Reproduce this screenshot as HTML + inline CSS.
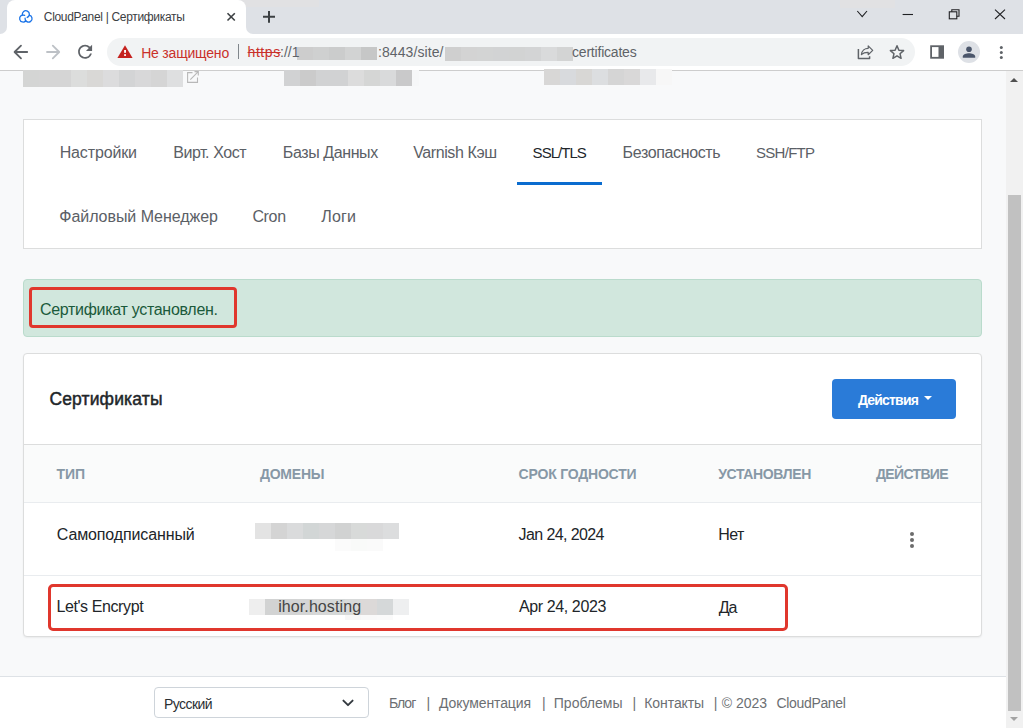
<!DOCTYPE html>
<html><head><meta charset="utf-8"><style>
html,body{margin:0;padding:0;}
body{width:1023px;height:728px;overflow:hidden;position:relative;background:#f8f9fa;font-family:"Liberation Sans", sans-serif;}
.t{position:absolute;white-space:pre;font-family:"Liberation Sans", sans-serif;}
.r{position:absolute;}
</style></head><body>
<!-- tab strip -->
<div class="r" style="left:0;top:0;width:1023px;height:71px;background:#fff"></div>
<div class="r" style="left:0;top:0;width:260px;height:10px;background:#dee1e6"></div>
<div class="r" style="left:0;top:0;width:7px;height:34px;background:#dee1e6;border-bottom-right-radius:7px"></div>
<div class="r" style="left:246px;top:0;width:777px;height:34px;background:#dee1e6;border-bottom-left-radius:7px"></div>
<div class="r" style="left:840px;top:0;width:55px;height:8px;background:#e1e1e3"></div>
<div class="r" style="left:240px;top:0;width:79px;height:7px;background:#e1e1e3"></div>
<div class="r" style="left:7px;top:0;width:239px;height:40px;background:#fff;border-radius:8px 8px 0 0"></div>
<div class="r" style="left:0;top:70px;width:1023px;height:1px;background:#cdcdcd"></div>
<!-- omnibox -->
<div class="r" style="left:107px;top:38px;width:808px;height:28px;background:#f1f3f4;border-radius:14px"></div>
<div class="r" style="left:238px;top:44px;width:1px;height:15px;background:#80868b"></div>
<!-- page -->
<div class="r" style="left:0;top:71px;width:1006px;height:605px;background:#f8f9fa"></div>
<div class="r" style="left:23px;top:119px;width:957px;height:128px;background:#fff;border:1px solid #dcdddd"></div>
<div class="r" style="left:517px;top:182px;width:85px;height:3px;background:#0a6ccf"></div>
<div class="r" style="left:23px;top:279px;width:957px;height:56px;background:#d1e7dd;border:1px solid #badbcc;border-radius:4px"></div>
<div class="r" style="left:29px;top:287px;width:202px;height:35px;border:3px solid #e0372d;border-radius:4px"></div>
<div class="r" style="left:23px;top:353px;width:957px;height:282px;background:#fff;border:1px solid #dcdddd;border-radius:4px;box-shadow:0 1px 2px rgba(0,0,0,.06)"></div>
<div class="r" style="left:24px;top:444px;width:957px;height:1px;background:#dcdddd"></div>
<div class="r" style="left:24px;top:445px;width:957px;height:57px;background:#fafbfb"></div>
<div class="r" style="left:24px;top:502px;width:957px;height:1px;background:#e9ecef"></div>
<div class="r" style="left:24px;top:575px;width:957px;height:1px;background:#e9ecef"></div>
<div class="r" style="left:832px;top:379px;width:124px;height:40px;background:#2a7bd8;border-radius:4px"></div>
<div class="r" style="left:923.5px;top:396px;width:0;height:0;border-left:4px solid transparent;border-right:4px solid transparent;border-top:4px solid #fff"></div>
<div class="r" style="left:48px;top:584px;width:734px;height:41px;border:3px solid #e0372d;border-radius:5px"></div>
<!-- kebab -->
<div class="r" style="left:910px;top:532px;width:4px;height:4px;border-radius:2px;background:#6c6c6c"></div>
<div class="r" style="left:910px;top:538px;width:4px;height:4px;border-radius:2px;background:#6c6c6c"></div>
<div class="r" style="left:910px;top:544px;width:4px;height:4px;border-radius:2px;background:#6c6c6c"></div>
<!-- footer -->
<div class="r" style="left:0;top:676px;width:1006px;height:1px;background:#dee2e6"></div>
<div class="r" style="left:0;top:677px;width:1006px;height:51px;background:#fff"></div>
<div class="r" style="left:154px;top:687px;width:213px;height:29px;border:1px solid #ced4da;border-radius:4px;background:#fff"></div>
<!-- scrollbar -->
<div class="r" style="left:1006px;top:71px;width:17px;height:657px;background:#f1f1f1"></div>
<div class="r" style="left:1008px;top:195px;width:13px;height:516px;background:#c1c1c1"></div>
<div class="r" style="left:1010px;top:78px;width:0;height:0;border-left:4px solid transparent;border-right:4px solid transparent;border-bottom:4px solid #505050"></div>
<div class="r" style="left:1010px;top:717px;width:0;height:0;border-left:4px solid transparent;border-right:4px solid transparent;border-top:4px solid #a3a3a3"></div>
<div class="r" style="left:23px;top:70px;width:16px;height:17px;background:#d4d5d4"></div><div class="r" style="left:39px;top:70px;width:16px;height:17px;background:#d5d5d5"></div><div class="r" style="left:55px;top:70px;width:16px;height:17px;background:#d5d5d5"></div><div class="r" style="left:71px;top:70px;width:16px;height:17px;background:#dcdddc"></div><div class="r" style="left:87px;top:70px;width:16px;height:17px;background:#d9d8d6"></div><div class="r" style="left:103px;top:70px;width:16px;height:17px;background:#dcdcdd"></div><div class="r" style="left:119px;top:70px;width:16px;height:17px;background:#d3d4d5"></div><div class="r" style="left:135px;top:70px;width:16px;height:17px;background:#d8d8d9"></div><div class="r" style="left:151px;top:70px;width:16px;height:17px;background:#d5d5d5"></div><div class="r" style="left:167px;top:70px;width:16px;height:17px;background:#dedfe0"></div><div class="r" style="left:284px;top:70px;width:16px;height:16px;background:#d1d2d3"></div><div class="r" style="left:300px;top:70px;width:16px;height:16px;background:#cbcbcb"></div><div class="r" style="left:316px;top:70px;width:16px;height:16px;background:#d1d2d3"></div><div class="r" style="left:332px;top:70px;width:16px;height:16px;background:#d1d2d3"></div><div class="r" style="left:348px;top:70px;width:16px;height:16px;background:#dcdcdc"></div><div class="r" style="left:364px;top:70px;width:16px;height:16px;background:#d5d6d5"></div><div class="r" style="left:380px;top:70px;width:16px;height:16px;background:#d9dadb"></div><div class="r" style="left:396px;top:70px;width:16px;height:16px;background:#c9c9ca"></div><div class="r" style="left:412px;top:70px;width:7px;height:16px;background:#f6f7f8"></div><div class="r" style="left:544px;top:69px;width:16px;height:16px;background:#d8d7d6"></div><div class="r" style="left:560px;top:69px;width:16px;height:16px;background:#d8dadd"></div><div class="r" style="left:576px;top:69px;width:16px;height:16px;background:#d8d7d5"></div><div class="r" style="left:592px;top:69px;width:16px;height:16px;background:#dcdee0"></div><div class="r" style="left:608px;top:69px;width:16px;height:16px;background:#d5d5d5"></div><div class="r" style="left:624px;top:69px;width:16px;height:16px;background:#d9d8d8"></div><div class="r" style="left:640px;top:69px;width:16px;height:16px;background:#e8e9eb"></div><div class="r" style="left:656px;top:69px;width:16px;height:16px;background:#f7f7f7"></div><div class="r" style="left:297px;top:47px;width:16px;height:13px;background:#cdcdcd"></div><div class="r" style="left:313px;top:47px;width:16px;height:13px;background:#cfd0d0"></div><div class="r" style="left:329px;top:47px;width:16px;height:13px;background:#cbcccc"></div><div class="r" style="left:345px;top:47px;width:16px;height:13px;background:#d2d3d3"></div><div class="r" style="left:361px;top:47px;width:16px;height:13px;background:#c6c7c7"></div><div class="r" style="left:445px;top:47px;width:16px;height:14px;background:#cfcfcf"></div><div class="r" style="left:461px;top:47px;width:16px;height:14px;background:#d3d3d3"></div><div class="r" style="left:477px;top:47px;width:16px;height:14px;background:#d3d4d4"></div><div class="r" style="left:493px;top:47px;width:16px;height:14px;background:#d2d3d4"></div><div class="r" style="left:509px;top:47px;width:16px;height:14px;background:#d2d3d3"></div><div class="r" style="left:525px;top:47px;width:16px;height:14px;background:#d3d4d5"></div><div class="r" style="left:541px;top:47px;width:16px;height:14px;background:#d9dadb"></div><div class="r" style="left:557px;top:47px;width:16px;height:14px;background:#d3d4d4"></div><div class="r" style="left:255px;top:523px;width:16px;height:16px;background:#e3e3e3"></div><div class="r" style="left:271px;top:523px;width:16px;height:16px;background:#d4d4d4"></div><div class="r" style="left:287px;top:523px;width:16px;height:16px;background:#dadbdc"></div><div class="r" style="left:303px;top:523px;width:16px;height:16px;background:#d2d6d6"></div><div class="r" style="left:319px;top:523px;width:16px;height:16px;background:#d6d7d8"></div><div class="r" style="left:335px;top:523px;width:16px;height:16px;background:#d1d2d2"></div><div class="r" style="left:351px;top:523px;width:16px;height:16px;background:#d8dad9"></div><div class="r" style="left:367px;top:523px;width:16px;height:16px;background:#d9d9da"></div><div class="r" style="left:383px;top:523px;width:16px;height:16px;background:#dcddde"></div><div class="r" style="left:335px;top:539px;width:16px;height:12px;background:#fbfbfb"></div><div class="r" style="left:351px;top:539px;width:16px;height:12px;background:#f9faf9"></div><div class="r" style="left:367px;top:539px;width:16px;height:12px;background:#fafafa"></div><div class="r" style="left:249px;top:599px;width:16px;height:16px;background:#eeeeee"></div><div class="r" style="left:265px;top:599px;width:16px;height:16px;background:#d2d3d3"></div><div class="r" style="left:281px;top:599px;width:16px;height:16px;background:#d3d4d4"></div><div class="r" style="left:297px;top:599px;width:16px;height:16px;background:#d4d5d5"></div><div class="r" style="left:313px;top:599px;width:16px;height:16px;background:#d6d7d7"></div><div class="r" style="left:329px;top:599px;width:16px;height:16px;background:#d5d8d8"></div><div class="r" style="left:345px;top:599px;width:16px;height:16px;background:#d8dada"></div><div class="r" style="left:361px;top:599px;width:16px;height:16px;background:#dcd9d8"></div><div class="r" style="left:377px;top:599px;width:16px;height:16px;background:#d5d8d9"></div><div class="r" style="left:393px;top:599px;width:16px;height:16px;background:#eeeff0"></div><div class="r" style="left:345px;top:615px;width:16px;height:5px;background:#f7f7f7"></div><div class="r" style="left:361px;top:615px;width:16px;height:5px;background:#f9f9f9"></div><div class="r" style="left:377px;top:615px;width:16px;height:5px;background:#fafafa"></div>
<svg class="r" style="left:0;top:0" width="1023" height="728" viewBox="0 0 1023 728">
<path d="M343.4 700.6 L348 705.2 L352.6 700.6" stroke="#343a40" stroke-width="1.9" fill="none" stroke-linecap="round" stroke-linejoin="round"/>
</svg>
<svg class="r" style="left:0;top:0" width="1023" height="100" viewBox="0 0 1023 100">
<g fill="none" stroke="#1a73e8" stroke-width="1.3">
<path stroke-linecap="round" d="M22.46 15.12 A3.5 3.5 0 0 1 27.40 11.11 A3.5 3.5 0 0 1 27.23 17.47 M25.85 20.78 A3.5 3.5 0 0 1 19.74 19.33 A3.5 3.5 0 0 1 24.61 15.37 M29.24 15.12 A3.5 3.5 0 0 1 30.63 21.37 A3.5 3.5 0 0 1 25.07 18.20"/>
</g>
<g stroke="#3c4043" stroke-width="1.6" stroke-linecap="butt" fill="none">
<path d="M227.5 13.2 L234.8 20.5 M234.8 13.2 L227.5 20.5"/>
</g>
<g stroke="#3c4043" stroke-width="2" fill="none"><path d="M263 16.8 H275 M269 11 V22.7"/></g>
<g stroke="#202124" stroke-width="1.1" fill="none">
<path d="M857.3 11 L862.2 16.6 L867 11"/>
<path d="M902.6 14.5 H913"/>
<rect x="949.3" y="11.8" width="7.5" height="7"/>
<path d="M951.8 11.8 V9.8 H959 V16.3 H956.8"/>
<path d="M995 9.6 L1005 19 M1005 9.6 L995 19"/>
</g>
<g stroke="#5f6368" stroke-width="1.8" fill="none" stroke-linecap="round" stroke-linejoin="round">
<path d="M27.2 52 H15 M21 45.6 L14.6 52 L21 58.4"/>
</g>
<g stroke="#bdc1c6" stroke-width="1.8" fill="none" stroke-linecap="round" stroke-linejoin="round">
<path d="M47 52 H59 M52.8 45.6 L59.2 52 L52.8 58.4"/>
</g>
<path fill="#5f6368" transform="translate(74.6 41.3) scale(0.875)" d="M17.65 6.35A7.958 7.958 0 0 0 12 4c-4.42 0-7.99 3.580-7.99 8s3.570 8 7.990 8c3.73 0 6.840-2.550 7.730-6h-2.080A5.990 5.990 0 0 1 12 18c-3.310 0-6-2.690-6-6s2.690-6 6-6c1.660 0 3.140.690 4.220 1.780L13 11h7V4l-2.350 2.350z"/>
<path fill="#c5221f" d="M125 45.3 L132.6 58 H117.4 Z"/>
<rect x="124.1" y="50" width="1.9" height="2.8" fill="#fff"/>
<rect x="124.1" y="54.2" width="1.9" height="1.7" fill="#fff"/>
<g stroke="#5f6368" stroke-width="1.5" fill="none" stroke-linejoin="round">
<path d="M858.4 48.9 V58.4 H869.6 V56.3"/>
<path stroke-width="1.2" d="M861.4 54.6 C861.8 50.6 864.8 48.3 868.2 48.3 V45.9 L872.7 50.4 L868.2 54.7 V52.4 C865.5 52.3 863.2 53 861.4 54.6 Z"/>
<path d="M897 45.8 L898.9 50.2 L903.6 50.6 L900 53.7 L901.1 58.3 L897 55.8 L892.9 58.3 L894 53.7 L890.4 50.6 L895.1 50.2 Z"/>
</g>
<rect x="931.1" y="46.2" width="12" height="11.6" fill="none" stroke="#5f6368" stroke-width="1.8"/>
<rect x="938.5" y="46" width="5.5" height="12" fill="#5f6368"/>
<circle cx="969" cy="52" r="11" fill="#dee1e6"/>
<circle cx="969" cy="49.3" r="2.8" fill="#4b566b"/>
<path d="M962.8 57.8 V56.4 C962.8 54.2 966.5 53.2 969 53.2 C971.5 53.2 975.2 54.2 975.2 56.4 V57.8 Z" fill="#4b566b"/>
<circle cx="1001.3" cy="47.4" r="1.5" fill="#5f6368"/><circle cx="1001.3" cy="52.5" r="1.5" fill="#5f6368"/><circle cx="1001.3" cy="57.6" r="1.5" fill="#5f6368"/>
<g stroke="#b8b8b8" stroke-width="1.1" fill="none">
<path d="M192.5 72.6 H187.6 V82.4 H197.5 V77.5"/>
<path d="M190.3 79.6 L198 71.8 M194.5 71.6 H198.3 V75.4"/>
</g>
</svg>
<div class="t" style="left:43.80px;top:11.34px;font-size:12px;line-height:12px;font-weight:400;color:#3c4043;letter-spacing:-0.320px;">CloudPanel | Сертификаты</div><div class="t" style="left:141.20px;top:45.65px;font-size:14px;line-height:14px;font-weight:400;color:#c9302a;letter-spacing:-0.200px;">Не защищено</div><div class="t" style="left:247.60px;top:45.15px;font-size:14px;line-height:14px;font-weight:400;color:#c9302a;letter-spacing:0.550px;text-decoration:line-through;">https</div><div class="t" style="left:280.00px;top:45.15px;font-size:14px;line-height:14px;font-weight:400;color:#5f6368;letter-spacing:0.000px;">://1</div><div class="t" style="left:377.90px;top:45.15px;font-size:14px;line-height:14px;font-weight:400;color:#5f6368;letter-spacing:0.100px;">:8443/site/</div><div class="t" style="left:572.00px;top:45.15px;font-size:14px;line-height:14px;font-weight:400;color:#5f6368;letter-spacing:-0.200px;">certificates</div><div class="t" style="left:59.70px;top:145.46px;font-size:16px;line-height:16px;font-weight:400;color:#5b6066;letter-spacing:-0.138px;">Настройки</div><div class="t" style="left:173.20px;top:145.46px;font-size:16px;line-height:16px;font-weight:400;color:#5b6066;letter-spacing:-0.444px;">Вирт. Хост</div><div class="t" style="left:282.80px;top:145.46px;font-size:16px;line-height:16px;font-weight:400;color:#5b6066;letter-spacing:-0.400px;">Базы Данных</div><div class="t" style="left:413.20px;top:145.46px;font-size:16px;line-height:16px;font-weight:400;color:#5b6066;letter-spacing:-0.400px;">Varnish Кэш</div><div class="t" style="left:532.60px;top:145.30px;font-size:15px;line-height:15px;font-weight:400;color:#212529;letter-spacing:-0.970px;">SSL/TLS</div><div class="t" style="left:622.60px;top:145.46px;font-size:16px;line-height:16px;font-weight:400;color:#5b6066;letter-spacing:-0.364px;">Безопасность</div><div class="t" style="left:756.00px;top:145.30px;font-size:15px;line-height:15px;font-weight:400;color:#5b6066;letter-spacing:-0.720px;">SSH/FTP</div><div class="t" style="left:59.30px;top:209.46px;font-size:16px;line-height:16px;font-weight:400;color:#5b6066;letter-spacing:-0.051px;">Файловый Менеджер</div><div class="t" style="left:252.40px;top:209.46px;font-size:16px;line-height:16px;font-weight:400;color:#5b6066;letter-spacing:-0.334px;">Cron</div><div class="t" style="left:321.20px;top:209.46px;font-size:16px;line-height:16px;font-weight:400;color:#5b6066;letter-spacing:0.200px;">Логи</div><div class="t" style="left:39.90px;top:301.96px;font-size:16px;line-height:16px;font-weight:400;color:#1b5a3b;letter-spacing:-0.295px;">Сертификат установлен.</div><div class="t" style="left:49.40px;top:390.69px;font-size:17.5px;line-height:17.5px;font-weight:400;color:#212529;letter-spacing:0.140px;-webkit-text-stroke:0.45px #212529;">Сертификаты</div><div class="t" style="left:857.90px;top:392.75px;font-size:14px;line-height:14px;font-weight:700;color:#ffffff;letter-spacing:-0.800px;">Действия</div><div class="t" style="left:56.50px;top:466.95px;font-size:14px;line-height:14px;font-weight:700;color:#8798a6;letter-spacing:-0.000px;">ТИП</div><div class="t" style="left:259.90px;top:466.95px;font-size:14px;line-height:14px;font-weight:700;color:#8798a6;letter-spacing:-0.200px;">ДОМЕНЫ</div><div class="t" style="left:518.60px;top:466.95px;font-size:14px;line-height:14px;font-weight:700;color:#8798a6;letter-spacing:-0.200px;">СРОК ГОДНОСТИ</div><div class="t" style="left:718.20px;top:466.95px;font-size:14px;line-height:14px;font-weight:700;color:#8798a6;letter-spacing:-0.356px;">УСТАНОВЛЕН</div><div class="t" style="left:876.00px;top:466.95px;font-size:14px;line-height:14px;font-weight:700;color:#8798a6;letter-spacing:-0.657px;">ДЕЙСТВИЕ</div><div class="t" style="left:56.80px;top:526.96px;font-size:16px;line-height:16px;font-weight:400;color:#212529;letter-spacing:-0.128px;">Самоподписанный</div><div class="t" style="left:518.60px;top:526.96px;font-size:16px;line-height:16px;font-weight:400;color:#212529;letter-spacing:-0.600px;">Jan 24, 2024</div><div class="t" style="left:718.20px;top:526.96px;font-size:16px;line-height:16px;font-weight:400;color:#212529;letter-spacing:-0.600px;">Нет</div><div class="t" style="left:56.40px;top:599.46px;font-size:16px;line-height:16px;font-weight:400;color:#212529;letter-spacing:-0.400px;">Let's Encrypt</div><div class="t" style="left:518.90px;top:599.46px;font-size:16px;line-height:16px;font-weight:400;color:#212529;letter-spacing:-0.382px;">Apr 24, 2023</div><div class="t" style="left:718.70px;top:599.96px;font-size:16px;line-height:16px;font-weight:400;color:#212529;letter-spacing:-1.000px;">Да</div><div class="t" style="left:278.20px;top:599.46px;font-size:16px;line-height:16px;font-weight:400;color:#454545;letter-spacing:0.091px;">ihor.hosting</div><div class="t" style="left:164.00px;top:696.55px;font-size:14px;line-height:14px;font-weight:400;color:#2b2f33;letter-spacing:-0.550px;">Русский</div><div class="t" style="left:389.00px;top:696.25px;font-size:14px;line-height:14px;font-weight:400;color:#6c6f73;letter-spacing:-1.000px;">Блог</div><div class="t" style="left:426.40px;top:696.25px;font-size:14px;line-height:14px;font-weight:400;color:#6c6f73;letter-spacing:0.000px;">|</div><div class="t" style="left:439.10px;top:696.25px;font-size:14px;line-height:14px;font-weight:400;color:#6c6f73;letter-spacing:-0.109px;">Документация</div><div class="t" style="left:542.00px;top:696.25px;font-size:14px;line-height:14px;font-weight:400;color:#6c6f73;letter-spacing:0.000px;">|</div><div class="t" style="left:553.80px;top:696.25px;font-size:14px;line-height:14px;font-weight:400;color:#6c6f73;letter-spacing:0.000px;">Проблемы</div><div class="t" style="left:632.60px;top:696.25px;font-size:14px;line-height:14px;font-weight:400;color:#6c6f73;letter-spacing:0.000px;">|</div><div class="t" style="left:644.30px;top:696.25px;font-size:14px;line-height:14px;font-weight:400;color:#6c6f73;letter-spacing:-0.086px;">Контакты</div><div class="t" style="left:713.80px;top:696.25px;font-size:14px;line-height:14px;font-weight:400;color:#6c6f73;letter-spacing:0.000px;">|</div><div class="t" style="left:721.80px;top:696.25px;font-size:14px;line-height:14px;font-weight:400;color:#6c6f73;letter-spacing:0.000px;">© 2023</div><div class="t" style="left:776.50px;top:696.25px;font-size:14px;line-height:14px;font-weight:400;color:#6c6f73;letter-spacing:-0.333px;">CloudPanel</div>
</body></html>
